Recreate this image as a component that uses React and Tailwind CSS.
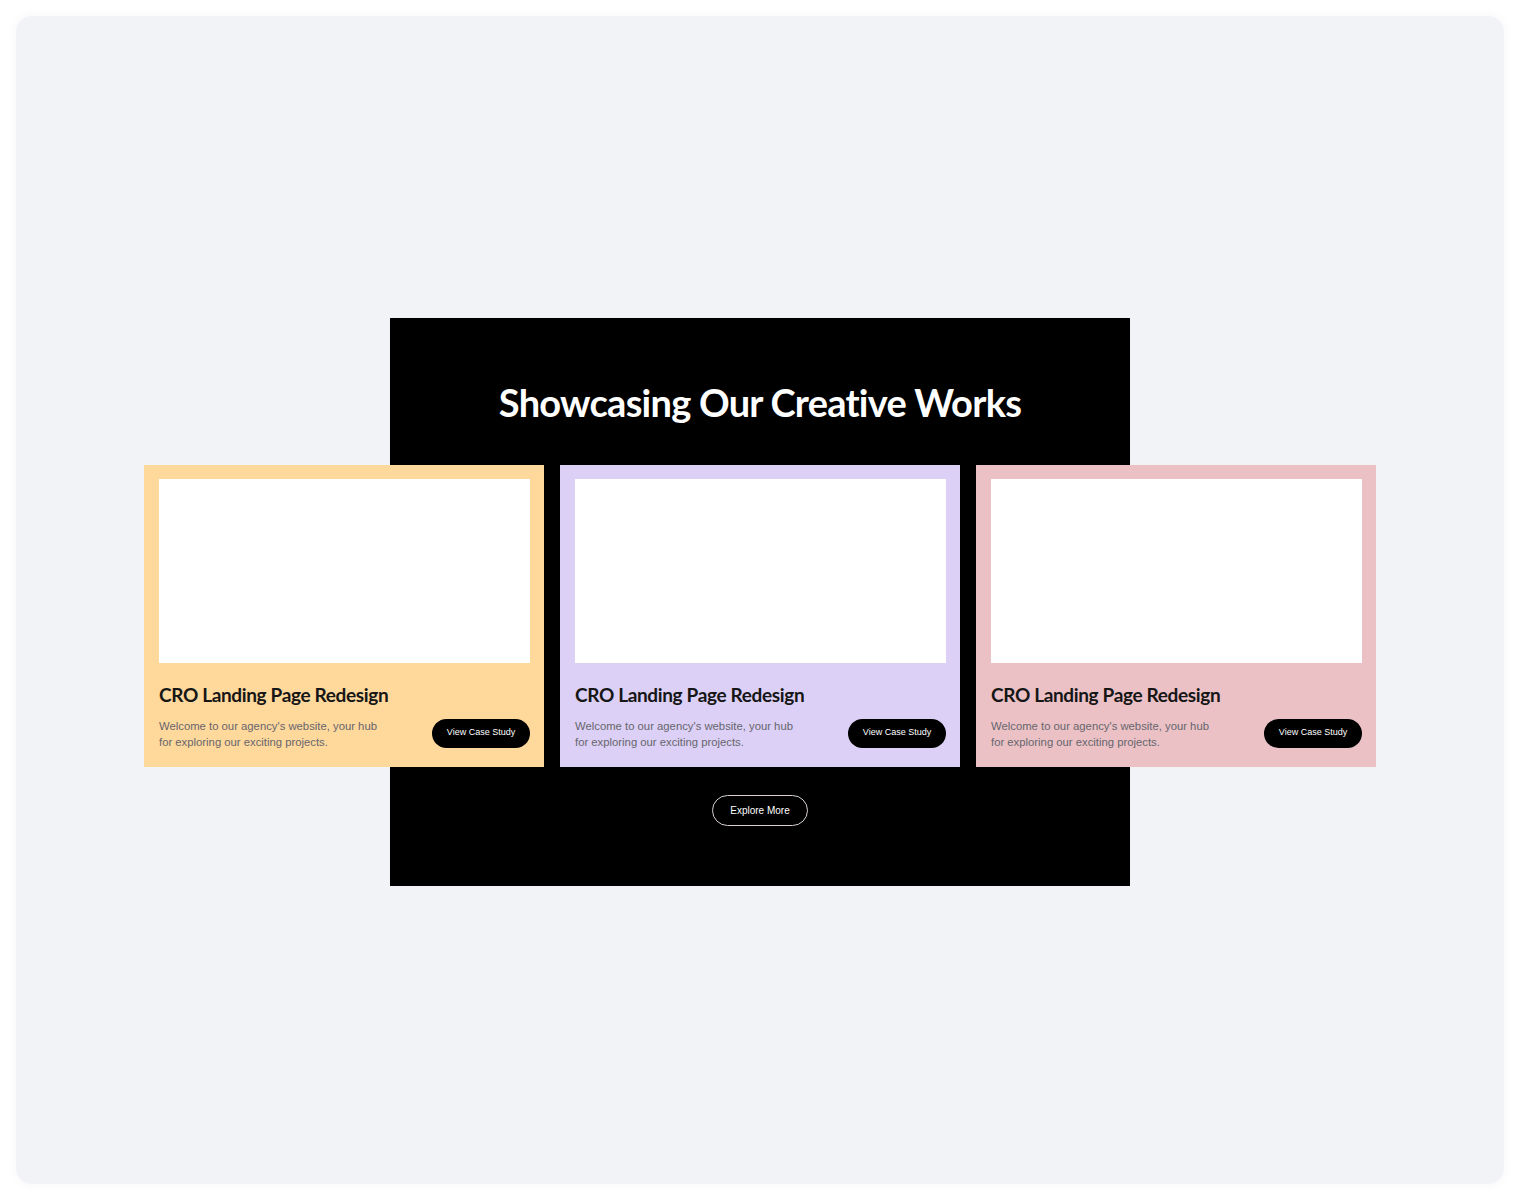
import React from 'react';

const projects = [
  { id: 1, bg: 'bg-[#ffd89c]' },
  { id: 2, bg: 'bg-[#dcd0f6]' },
  { id: 3, bg: 'bg-[#ebc1c6]' },
];

function ProjectCard({ bg }) {
  return (
    <div className={`${bg} flex flex-col pl-[15px] pr-[14px] pt-[14px] pb-[17px]`}>
      <div className="h-[184px] bg-white" />
      <h3 className="mt-[20px] font-['Lato',sans-serif] text-[19px] font-bold leading-[24px] tracking-[-0.35px] text-[#161616]">
        CRO Landing Page Redesign
      </h3>
      <div className="mt-[10px] flex items-start justify-between">
        <p className="mt-[1px] w-[226px] font-['Liberation_Sans',sans-serif] text-[11.3px] leading-[16px] text-[#66666c]">
          Welcome to our agency's website, your hub for exploring our exciting projects.
        </p>
        <button className="mt-[2px] flex h-[29px] w-[98px] items-center justify-center rounded-full bg-black font-['Liberation_Sans',sans-serif] text-[9px] text-white">
          View Case Study
        </button>
      </div>
    </div>
  );
}

export default function App() {
  return (
    <div className="min-h-screen bg-white p-4">
      <div className="flex h-[1168px] items-center justify-center rounded-2xl bg-[#f2f3f7] pt-[3px] shadow-[0_0_12px_rgba(0,0,0,0.04)]">
        <section className="flex w-[740px] flex-col items-center bg-black pt-[60px] pb-[60px]">
          <h2 className="font-['Lato',sans-serif] text-[38px] font-bold leading-[48px] tracking-[-0.75px] text-white">
            Showcasing Our Creative Works
          </h2>
          <div className="mt-[39px] grid w-[1232px] grid-cols-3 gap-4">
            {projects.map((p) => (
              <ProjectCard key={p.id} bg={p.bg} />
            ))}
          </div>
          <button className="mt-[28px] flex h-[31px] w-[96px] items-center justify-center rounded-full border border-[#d8d0d0] font-['Liberation_Sans',sans-serif] text-[10px] text-white">
            Explore More
          </button>
        </section>
      </div>
    </div>
  );
}
